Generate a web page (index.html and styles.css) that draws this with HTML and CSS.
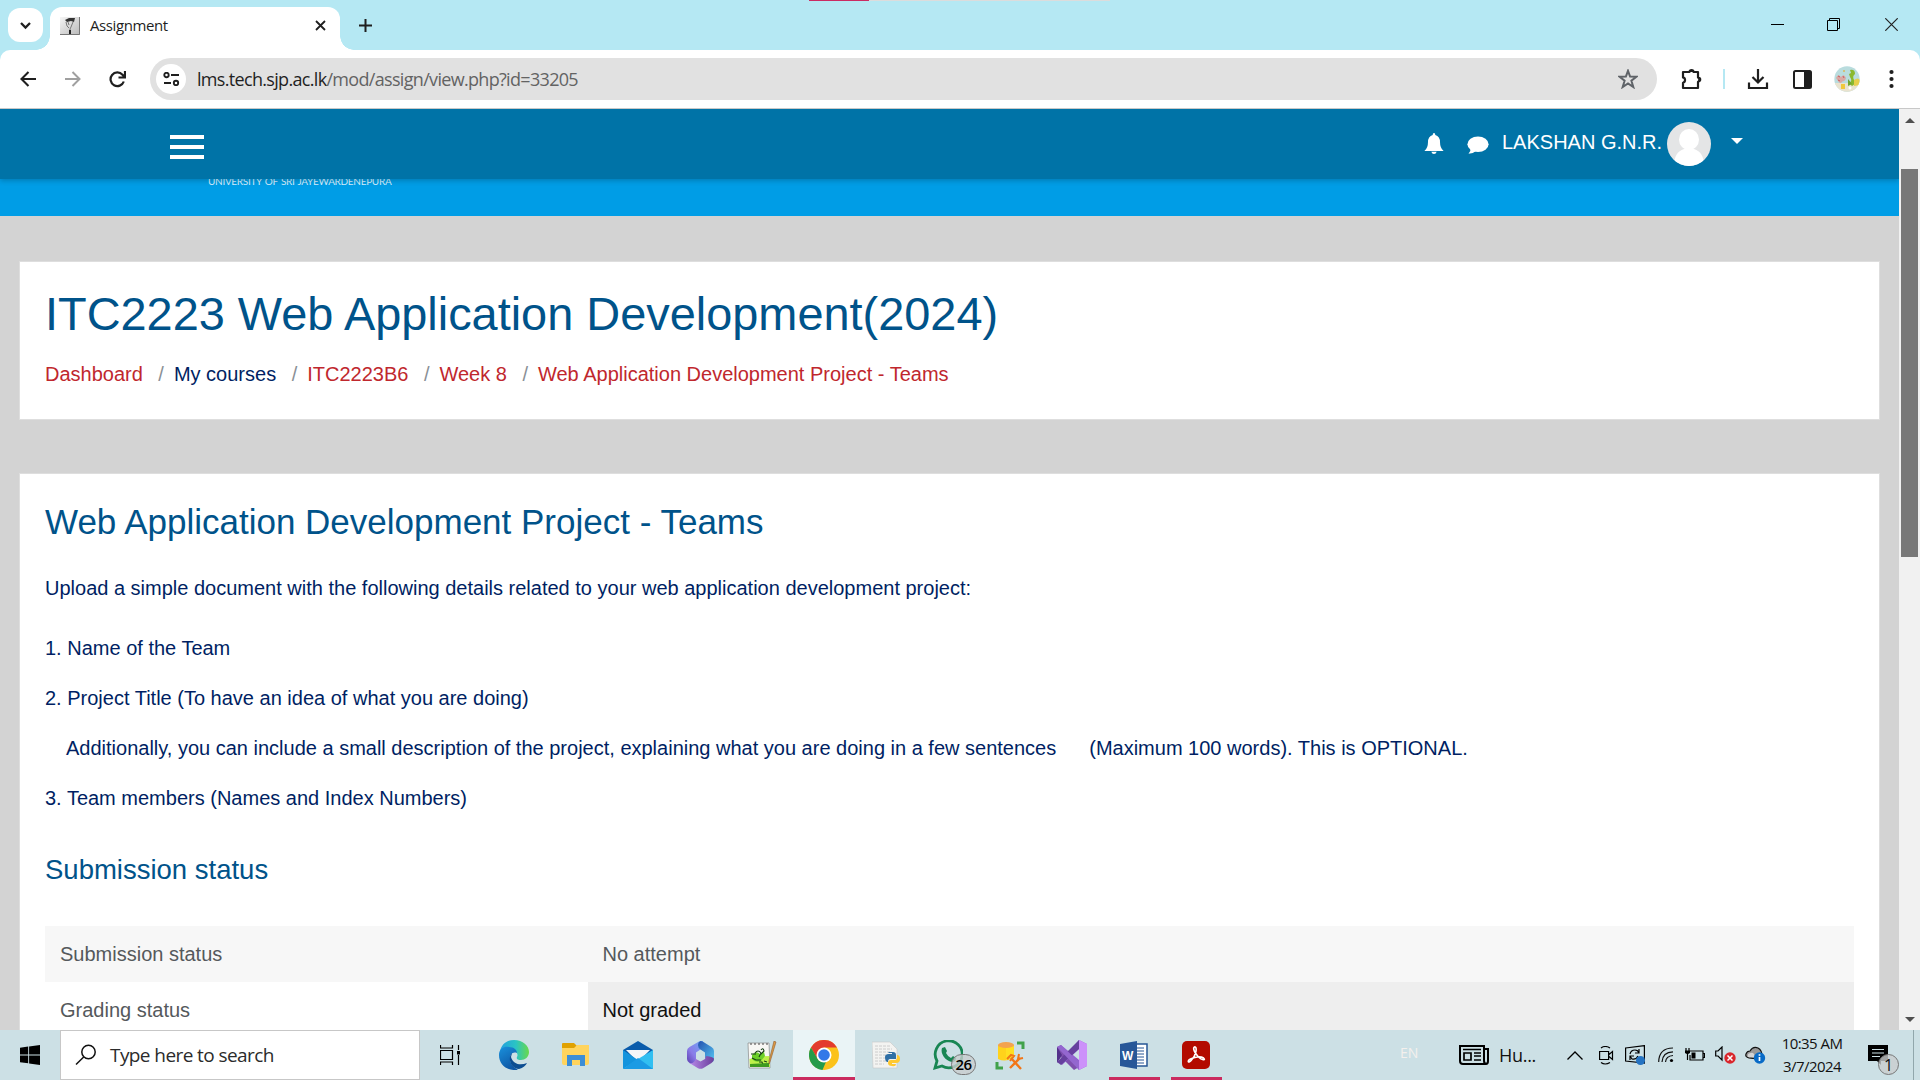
FILE: index.html
```
<!DOCTYPE html>
<html lang="en">
<head>
<meta charset="utf-8">
<title>Assignment</title>
<link rel="stylesheet" href="styles.css">
</head>
<body>
<div class="screen">
  <div class="peek"></div>
  <header class="tabstrip">
    <div class="tab-search"><svg width="13" height="9" viewBox="0 0 13 9"><path d="M2 2l4.5 4.5L11 2" fill="none" stroke="#1f1f1f" stroke-width="2.3"/></svg></div>
    <div class="tab">
      <svg class="favicon" width="20" height="18" viewBox="0 0 20 18"><defs><linearGradient id="fav" x1="0" y1="0" x2="1" y2="1"><stop offset="0" stop-color="#f6f6f6"/><stop offset="1" stop-color="#b9b9b9"/></linearGradient></defs><path d="M0 0h20v18H0z" fill="url(#fav)"/><path d="M19.500 0v17.500H0" fill="none" stroke="#777"/><path d="M5 3l4-2h6l-1 4-3-1-4 1z" fill="#333"/><path d="M6 5l1 4 2 2M13 5l-2 5-1 2v4M8 5l1 3" fill="none" stroke="#777" stroke-width="1"/><path d="M9 13h2v4H9z" fill="#222"/></svg>
      <span class="tab-title">Assignment</span>
      <svg class="tab-close" width="11" height="11" viewBox="0 0 11 11"><path d="M1 1l9 9M10 1l-9 9" stroke="#1f1f1f" stroke-width="1.800"/></svg>
    </div>
    <svg class="new-tab" width="13" height="13" viewBox="0 0 13 13"><path d="M6.500 0v13M0 6.500h13" stroke="#1f1f1f" stroke-width="2"/></svg>
    <div class="window-buttons">
      <svg width="13" height="13" viewBox="0 0 13 13"><path d="M0 6.500h13" stroke="#000"/></svg>
      <svg width="13" height="13" viewBox="0 0 13 13"><path d="M.5 2.500h10v10H.5zM2.500 2.500v-2h10v10h-2" fill="none" stroke="#000"/></svg>
      <svg width="13" height="13" viewBox="0 0 13 13"><path d="M.3.3l12.400 12.400M12.700.3L.3 12.700" stroke="#222" stroke-width="1.200"/></svg>
    </div>
  </header>

  <div class="toolbar">
    <svg class="back" width="16" height="16" viewBox="0 0 16 16"><path d="M8.500 1L1.500 8l7 7M1.500 8H16" fill="none" stroke="#1f1f1f" stroke-width="2.100"/></svg>
    <svg class="fwd" width="16" height="16" viewBox="0 0 16 16"><path d="M7.500 1l7 7-7 7M14.500 8H0" fill="none" stroke="#a0a0a0" stroke-width="2"/></svg>
    <svg class="reload" width="17" height="17" viewBox="0 0 17 17"><path d="M14.800 10.500A6.800 6.800 0 1 1 13.500 3.800L15.500 6M16 0v6.500H9.500" fill="none" stroke="#1f1f1f" stroke-width="2.200"/></svg>
    <div class="omnibox">
      <span class="site-info"><svg width="17" height="14" viewBox="0 0 17 14"><path d="M8 3h8M1 11h7" stroke="#1f1f1f" stroke-width="2"/><circle cx="3.500" cy="3" r="2.200" fill="none" stroke="#1f1f1f" stroke-width="1.900"/><circle cx="13" cy="11" r="2.200" fill="none" stroke="#1f1f1f" stroke-width="1.900"/></svg></span>
      <span class="url">lms.tech.sjp.ac.lk<span class="url-path">/mod/assign/view.php?id=33205</span></span>
      <svg class="star" width="20" height="20" viewBox="0 0 20 20"><path d="M10 1.800l2.100 5.800 6.300.2-5 3.900 1.900 6.300-5.300-3.600L4.700 18l1.900-6.300-5-3.900 6.300-.2z" fill="none" stroke="#5f6368" stroke-width="2"/></svg>
    </div>
    <div class="tools">
      <svg width="22" height="22" viewBox="0 0 22 22"><path d="M2 4h6.500a2 2 0 0 1 4 0H17v5.500a2.200 2.200 0 0 1 0 4.200V20H2v-5.200a2.800 2.800 0 0 0 0-5.400z" fill="none" stroke="#1f1f1f" stroke-width="2.200" stroke-linejoin="round"/><path d="M8 4a2.600 2.600 0 0 1 5 0zM17.500 8.700a2.800 2.800 0 0 1 0 5.600z" fill="#1f1f1f"/></svg>
      <i class="divider"></i>
      <svg width="22" height="22" viewBox="0 0 22 22"><path d="M11 1v13M5.500 9l5.500 5.500L16.500 9M2 14.500V20h18v-5.500" fill="none" stroke="#1f1f1f" stroke-width="2.200"/></svg>
      <svg width="19" height="19" viewBox="0 0 19 19"><rect x="1" y="1" width="17" height="17" rx="1.500" fill="#fff" stroke="#1f1f1f" stroke-width="2"/><path d="M11 1h7v17h-7z" fill="#1f1f1f"/></svg>
      <svg width="26" height="26" viewBox="0 0 26 26"><defs><clipPath id="pc"><circle cx="13" cy="13" r="12.700"/></clipPath></defs><g clip-path="url(#pc)"><path d="M0 0h26v26H0z" fill="#b9dcde"/><path d="M0 17h26v9H0z" fill="#e9e3cf"/><path d="M2 12q2-5 5-1 3-4 5 1-1 4-3 3-3 4-5 0z" fill="#d9a9a5"/><path d="M4 10l2 1M9 10l1 2M4 14l2 1" stroke="#c75f61"/><path d="M16 4q5-1 5 4-3 2-1 6 2 4-2 6l-3-3q4-2 1-6l-1-3 2-1z" fill="#8ab92e"/><path d="M14 13l4 5-4 2z" fill="#6fa634"/><path d="M20 14q4-3 6 0v5l-6 1z" fill="#e8cf4b"/><path d="M7 18h4v5H7z" fill="#efc83d"/><circle cx="10" cy="5" r="1" fill="#d9b95a"/><circle cx="16" cy="22" r="1.500" fill="#fff"/></g></svg>
      <svg width="5" height="20" viewBox="0 0 5 20"><g fill="#1f1f1f"><circle cx="2.500" cy="3" r="2.100"/><circle cx="2.500" cy="10" r="2.100"/><circle cx="2.500" cy="17" r="2.100"/></g></svg>
    </div>
  </div>

  <div class="viewport">
    <main class="page">
      <nav class="topnav">
        <div class="burger"><i></i><i></i><i></i></div>
        <div class="user">
          <svg class="bell" width="20" height="22" viewBox="0 0 20 22"><path d="M10 0q1.300 0 1.300 2Q16 3.500 16 9q0 6 3.600 9H.4Q4 15 4 9q0-5.500 4.700-7 0-2 1.300-2zM7.300 18.800h5.400Q12 21 10 21t-2.700-2.200z" fill="#fff"/></svg>
          <svg class="comment" width="22" height="19" viewBox="0 0 22 19"><ellipse cx="11" cy="8.300" rx="10.600" ry="7.800" fill="#fff"/><path d="M3.500 12q.5 3.500-2 5.800 4.500 0 7.500-2.800z" fill="#fff"/></svg>
          <span class="user-name">LAKSHAN G.N.R.</span>
          <svg class="avatar" width="44" height="44" viewBox="0 0 44 44"><defs><clipPath id="av"><circle cx="22" cy="22" r="22"/></clipPath></defs><g clip-path="url(#av)"><path d="M0 0h44v44H0z" fill="#e4e5e6"/><ellipse cx="22" cy="17.500" rx="10" ry="10.500" fill="#fff"/><path d="M7 44q0-14 10-17h10q10 3 10 17z" fill="#fff"/></g></svg>
          <svg class="caret" width="12" height="6" viewBox="0 0 12 6"><path d="M0 0h12L6 6z" fill="#fff"/></svg>
        </div>
      </nav>
      <div class="banner"><span>UNIVERSITY OF SRI JAYEWARDENEPURA</span></div>

      <section class="card course">
        <h1>ITC2223 Web Application Development(2024)</h1>
        <ol class="crumbs"><li>Dashboard</li><li class="plain">My courses</li><li>ITC2223B6</li><li>Week 8</li><li>Web Application Development Project - Teams</li></ol>
      </section>

      <section class="card content">
        <h2>Web Application Development Project - Teams</h2>
        <p class="lead">Upload a simple document with the following details related to your web application development project:</p>
        <p>1. Name of the Team</p>
        <p>2. Project Title (To have an idea of what you are doing)</p>
        <p class="indent"><span>Additionally, you can include a small description of the project, explaining what you are doing in a few sentences</span><span>(Maximum 100 words). This is OPTIONAL.</span></p>
        <p>3. Team members (Names and Index Numbers)</p>
        <h3>Submission status</h3>
        <div class="status">
          <div class="row shaded"><span>Submission status</span><span>No attempt</span></div>
          <div class="row"><span>Grading status</span><span class="graded">Not graded</span></div>
        </div>
      </section>
    </main>
    <aside class="scrollbar">
      <svg width="10" height="5" viewBox="0 0 10 5"><path d="M0 5h10L5 0z" fill="#505050"/></svg>
      <div class="thumb"></div>
      <svg class="down" width="10" height="5" viewBox="0 0 10 5"><path d="M0 0h10L5 5z" fill="#505050"/></svg>
    </aside>
  </div>

  <footer class="taskbar">
    <div class="start"><svg width="20" height="20" viewBox="0 0 20 20"><path d="M0 2.800L8.200 1.600v7.900H0zM9.100 1.500L20 0v9.500H9.100zM0 10.400h8.200v7.900L0 17.200zM9.100 10.400H20V20L9.100 18.400z"/></svg></div>
    <div class="search"><svg width="22" height="22" viewBox="0 0 22 22"><circle cx="13.500" cy="8" r="6.700" fill="none" stroke="#111" stroke-width="1.500"/><path d="M8.700 13L1 20.500" stroke="#111" stroke-width="1.500"/></svg><span>Type here to search</span></div>
    <div class="view"><svg width="20" height="20" viewBox="0 0 20 20"><path d="M.5 0v3h12V0M.5 20v-3h12v3M.5 5.500h12v9H.5zM18.500 0v5M18.500 10v10" fill="none" stroke="#000" stroke-width="1.200"/><path d="M17 6h3v3.500h-3z"/></svg></div>
    <div class="apps">
      <div class="app"><svg width="30" height="30" viewBox="0 0 30 30"><defs><linearGradient id="e1"><stop offset="0" stop-color="#249fdf"/><stop offset=".55" stop-color="#2ac4c4"/><stop offset="1" stop-color="#6ad94a"/></linearGradient><linearGradient id="e2" x1="0" y1="0" x2=".5" y2="1"><stop offset="0" stop-color="#1a91dc"/><stop offset="1" stop-color="#0e57a5"/></linearGradient></defs><path d="M1 12C2 4 8 0 15 0c9 0 15 6 15 12 0 5-4 8-8 8-3 0-5-1-4-3 2-4-2-7-7-7-4 0-8 1-10 2z" fill="url(#e1)"/><path d="M0 15c0-7 6-9 10-8 5 0 8 3 8 6-7-3-10 8-3 14l4 3C8 31 0 25 0 15z" fill="url(#e2)"/><path d="M13 13c-5 5-1 16 7 16 4-1 7-4 8-6-7 3-14 1-16-6z" fill="#0c4d91"/></svg></div>
      <div class="app"><svg width="28" height="24" viewBox="0 0 28 24"><path d="M0 1q0-1 1-1h11l3 3v6H0z" fill="#e0a100"/><path d="M0 5h12l3-3h12v18q0 2-2 2H2q-2 0-2-2z" fill="#ffd45d"/><path d="M5 12h18v11h-5v-6h-8v6H5z" fill="#3c8ed6"/></svg></div>
      <div class="app"><svg width="30" height="28" viewBox="0 0 30 28"><path d="M0 9L15 0l15 9v10H0z" fill="#0a5cab"/><path d="M3 9h24L15 21z" fill="#f4f6f8"/><path d="M0 9l15 10L0 28z" fill="#1494dd"/><path d="M30 9v19H0l15-10z" fill="#31bff1"/><path d="M0 28h30L15 17z" fill="#1b9be4"/></svg></div>
      <div class="app"><svg width="27" height="28" viewBox="0 0 27 28"><defs><linearGradient id="m1" x1="1" y1="0" x2="0" y2="1"><stop offset="0" stop-color="#6fa8f5"/><stop offset=".6" stop-color="#8a7be8"/><stop offset="1" stop-color="#5a3cae"/></linearGradient><linearGradient id="m2" x1="0" y1="0" x2="1" y2="1"><stop offset="0" stop-color="#2450ae"/><stop offset="1" stop-color="#56c8f4"/></linearGradient><linearGradient id="m3"><stop offset="0" stop-color="#b88aea"/><stop offset="1" stop-color="#6a3f9b"/></linearGradient></defs><path d="M12 .5L2.500 6Q0 7.500 0 10v8q0 2.500 2.500 4l2 1Q9 23 9 18v-6.500l4.500-3L16 5V0q-2-.6-4 .5z" fill="url(#m1)"/><path d="M13.500 0q1.200 0 2.500.7L24.500 6Q27 7.500 27 10v8q0 2-1.500 3.300L18 17v-5.500l-4.500-3Q11 7 11 4q0-3 2.500-4z" fill="url(#m2)"/><path d="M2 21.700q4.500 1.800 7-3.700l4.500 2.500L18 18l1-3q8 1 8 3 0 2.500-2.500 4L16 27.200q-2.500 1.300-5 0z" fill="url(#m3)"/></svg></div>
      <div class="app"><svg width="30" height="28" viewBox="0 0 30 28"><path d="M1 2h21l1 25H2z" fill="#f7f7f4" stroke="#888" stroke-width=".7"/><path d="M3 3h2M7 3h2M11 3h2M15 3h2M19 3h2" stroke="#444"/><path d="M2.500 18q8-3 20-3l.5 11H3z" fill="#bdf04a"/><path d="M5 14q4-5 8-1l4-2 1 4-4 5q-6 2-9-2z" fill="#6ccf2a"/><path d="M4 13h5M5 17l4 2h5M8 12q3-4 6 0l-2 4M14 9q2-3 3 1l-3 3M12 21h3l1 3M17 20l3 1" fill="none" stroke="#153e15" stroke-width="1.100"/><path d="M3 23l19-1v4H3z" fill="#3e9a20"/><path d="M27 0l2 1-6 20-1 2v-3z" fill="#df9a43" stroke="#8b5d31" stroke-width=".6"/></svg></div>
      <div class="app active"><svg width="30" height="30" viewBox="0 0 30 30"><circle cx="15" cy="15" r="15" fill="#fbc21b"/><path d="M2 7.500A15 15 0 0 1 28 7.500H15L8.500 19z" fill="#e33b2e"/><path d="M2 7.500l6.500 11.300q2.500 4 8.500 3L13.500 30A15 15 0 0 1 2 7.500z" fill="#259b4a"/><circle cx="15" cy="15" r="7.500" fill="#fff"/><circle cx="15" cy="15" r="5.800" fill="#3379e8"/></svg></div>
      <div class="app"><svg width="28" height="28" viewBox="0 0 28 28"><path d="M0 1h18l7 7v19H1z" fill="#f3f3f1" stroke="#c6c6c6" stroke-width=".6"/><path d="M3 5h15M3 8h17M3 11h15M3 14h14M3 17h11M3 20h12M3 23h9" stroke="#ccc" stroke-width="1" stroke-dasharray="3 1"/><path d="M17 11h4q3 0 3 3v4h-6q-2 0-2 3h-1q-2-1-2-5 0-3 4-3h3v-1h-4z" fill="#2f6fa5"/><path d="M25 14q3 0 3 4 0 4-4 4h-4v1h4q0 3-4 2-4 0-4-3 0-3 3-3h4q2 0 2-3z" fill="#ffc931"/></svg></div>
      <div class="app"><svg width="30" height="30" viewBox="0 0 30 30"><path d="M2 28l2-7A13.500 13.500 0 1 1 9 26z" fill="none" stroke="#188653" stroke-width="2.800"/><path d="M9 8l3-1 2 4-1 2q2 4 5 5l2-2 3 2q0 4-4 4C12 21 7 13 9 8z" fill="#188653"/></svg><span class="badge unread">26</span></div>
      <div class="app"><svg width="30" height="29" viewBox="0 0 30 29"><path d="M3 4h16v12q-8 6-16 2z" fill="#ffd21b"/><path d="M11 5h8v11l-8 3z" fill="#ffdf20"/><ellipse cx="11" cy="4" rx="8" ry="3" fill="#f3a34f"/><path d="M22 2h6v6M2 21v6h6" fill="none" stroke="#41a24a" stroke-width="3"/><path d="M16 17l10 11M25 17L15 27" stroke="#f27617" stroke-width="2.400"/><path d="M12 18l4-4 3 1-4 5M24 13l-1 5 5-1" fill="none" stroke="#f27617" stroke-width="2"/></svg></div>
      <div class="app"><svg width="30" height="30" viewBox="0 0 30 30"><path d="M0 7l4-2 18 22-5 3L4 17l-4 5z" fill="#7f50ae"/><path d="M0 7l5 8-5 8z" fill="#53318b"/><path d="M4 24L22 0l8 4v22l-8 4L4 5l18 15V9L5 25z" fill="#9360d0"/><path d="M22 0l8 4v22l-8 4z" fill="#cc91fa"/><path d="M0 22l4 3L22 9V0z" fill="#66409e"/><path d="M4 5l18 17v8L0 7z" fill="#9467cf"/></svg></div>
      <div class="app open"><svg width="28" height="28" viewBox="0 0 28 28"><path d="M15 3h12v22H15z" fill="#fff" stroke="#275795" stroke-width="1.500"/><path d="M17 7h7M17 10h7M17 13h7M17 16h7M17 19h7M17 22h7" stroke="#275795" stroke-width="1.200"/><path d="M0 3l17-3v28L0 25z" fill="#275798"/><text x="2" y="19" class="word-letter">W</text></svg></div>
      <div class="app open"><svg width="28" height="28" viewBox="0 0 28 28"><rect width="28" height="28" rx="5" fill="#b30b00"/><path d="M12.500 6c3-1 2 8-3 13-3 4-5 1-1-1 4-2 10-3 13-1 3 3-2 2-5-1-4-4-6-9-4-10z" fill="none" stroke="#fff" stroke-width="1.600"/></svg></div>
    </div>
    <div class="lang">EN</div>
    <div class="news"><svg width="30" height="20" viewBox="0 0 30 20"><path d="M1 1h24v15q0 3 3 3H4q-3 0-3-3zM25 4h4v12q0 3-2 3" fill="none" stroke="#000" stroke-width="2"/><path d="M5 8h7v7H5zM4 4.500h18M15 8h7M15 11h7M15 15h7" fill="none" stroke="#000" stroke-width="1.700"/></svg><span>Hu...</span></div>
    <div class="tray">
      <svg width="16" height="9" viewBox="0 0 16 9"><path d="M.5 8.500L8 1l7.500 7.500" fill="none" stroke="#000" stroke-width="1.300"/></svg>
      <svg width="15" height="19" viewBox="0 0 15 19"><path d="M.6 5.500h9v8h-9zM10 8.500l3.500-3v8l-3.500-3M2 2q4-3 9 0M2 16.500q4 3 9 0" fill="none" stroke="#000" stroke-width="1.200"/></svg>
      <svg width="20" height="20" viewBox="0 0 20 20"><path d="M.6 3L19.400.6V18L.6 16z" fill="none" stroke="#000" stroke-width="1.200"/><path d="M5 9q1-4 5-4 3 0 4 3M14 4v4h-4M13 11q-2 4-6 3l-2-3M5 15v-4h4" fill="none" stroke="#000" stroke-width="1.200"/><circle cx="15.500" cy="15.500" r="4.500" fill="#2573c2"/></svg>
      <svg width="16" height="16" viewBox="0 0 16 16"><path d="M.7 15Q1 1 15 1M4 15Q4.500 5 15 4.800M7.500 15Q8 9 15 8.500" fill="none" stroke="#111" stroke-width="1.200"/><circle cx="13.500" cy="13.500" r="1.600"/></svg>
      <svg width="20" height="14" viewBox="0 0 20 14"><path d="M5 3h13v9H5V7M18 5.500h1.500v4H18M2.500 5v7M1 0v3M4 0v3" fill="none" stroke="#000" stroke-width="1.200"/><path d="M0 2.500h5V5q-2.500 2-5 0zM6.500 4.500h4v6h-4z"/></svg>
      <svg width="21" height="18" viewBox="0 0 21 18"><path d="M.7 5H3l4-4v13l-4-4H.7z" fill="none" stroke="#000" stroke-width="1.200"/><circle cx="15" cy="12" r="5.700" fill="#d9262c"/><path d="M12.500 9.500l5 5M17.500 9.500l-5 5" stroke="#fff" stroke-width="1.500"/></svg>
      <svg width="21" height="18" viewBox="0 0 21 18"><path d="M4 12q-4-1-3-4 1-3 4-3 3-5 8-3 4 2 4 8l-5 3z" fill="#999" stroke="#111" stroke-width="1.200"/><path d="M3 11q-1-4 3-4 3-1 4 4" fill="#d4d4d4"/><circle cx="14.500" cy="12" r="5.700" fill="#086bc7"/><path d="M14.500 11v4M14.500 8.300v1.500" stroke="#fff" stroke-width="1.700"/></svg>
    </div>
    <div class="clock"><span>10:35 AM</span><span>3/7/2024</span></div>
    <div class="notify"><svg width="20" height="20" viewBox="0 0 20 20"><path d="M0 0h20v16h-7v4l-4-4H0z"/><path d="M4 4.500h12M4 8h12M4 11.500h8" stroke="#cce0e5" stroke-width="1.200"/></svg><span class="badge">1</span></div>
  </footer>
</div>
</body>
</html>
```
FILE: styles.css
```
* { box-sizing: border-box; }
body { margin: 0; font-family: "Liberation Sans", Arial, sans-serif; }
svg { display: block; flex: none; }
h1, h2, h3, p, ol { margin: 0; padding: 0; font-weight: 400; }

.screen { width: 1920px; height: 1080px; overflow: hidden; display: flex; flex-direction: column; position: relative; background: #b5e8f3; }
.peek { position: absolute; top: 0; left: 809px; width: 301px; height: 1px; background: linear-gradient(90deg, #cb2b62 60px, #dcdcdc 60px); }

/* Browser chrome */
.tabstrip { height: 50px; flex: none; display: flex; align-items: flex-start; padding-left: 8px; }
.tab-search { width: 35px; height: 34px; margin-top: 8px; border-radius: 12px; background: #fff; display: flex; align-items: center; justify-content: center; }
.tab { position: relative; width: 290px; height: 43px; margin: 7px 0 0 7px; padding: 0 14px 0 10px; border-radius: 12px 12px 0 0; background: #fff; display: flex; align-items: center; }
.tab::before, .tab::after { content: ""; position: absolute; bottom: 0; width: 14px; height: 14px; }
.tab::before { left: -14px; background: radial-gradient(circle at 0 0, transparent 13.5px, #fff 14px); }
.tab::after { right: -14px; background: radial-gradient(circle at 100% 0, transparent 13.5px, #fff 14px); }
.favicon { margin-bottom: 5px; }
.tab-title { margin: 0 auto 7px 10px; font: 15px/20px "Open Sans", "Noto Sans", sans-serif; letter-spacing: -.4px; color: #1f1f1f; }
.tab-close { margin-bottom: 7px; }
.new-tab { margin: 19px 0 0 19px; }
.window-buttons { margin: 18px 22px 0 auto; display: grid; grid-template-columns: 56px 58px 13px; }

.toolbar { height: 59px; flex: none; display: flex; align-items: center; padding: 0 26px 0 20px; background: #fff; border-bottom: 1px solid #c8c8c8; border-radius: 10px 10px 0 0; }
.fwd { margin-left: 29px; }
.reload { margin-left: 28px; }
.omnibox { width: 1507px; height: 42px; margin-left: 24px; padding: 0 19px 0 6px; display: flex; align-items: center; border-radius: 21px; background: #e1e1e1; }
.site-info { width: 30px; height: 30px; border-radius: 50%; background: #fff; display: flex; align-items: center; justify-content: center; }
.url { margin: 0 auto 1px 11px; font: 18px/26px "Open Sans", "Noto Sans", sans-serif; letter-spacing: -.68px; color: #1f1f1f; white-space: nowrap; }
.url-path { color: #636363; }
.tools { margin-left: 24px; display: grid; grid-template-columns: 42px 24px 46px 41px 55px 5px; align-items: center; }
.divider { width: 2px; height: 20px; background: #b5e8f3; }

/* Page */
.viewport { height: 921px; flex: none; display: flex; }
.page { width: 1899px; overflow: hidden; background: #d3d3d3; }
.topnav { position: relative; z-index: 1; height: 70px; padding: 0 156px 0 170px; display: flex; align-items: flex-start; justify-content: space-between; background: #0073a7; box-shadow: 0 2px 5px rgba(0, 0, 0, .2); }
.burger { padding-top: 26px; display: grid; gap: 6px; }
.burger i { width: 34px; height: 4px; background: #fff; }
.user { display: flex; padding-top: 13px; color: #fff; }
.bell { margin-top: 11px; }
.comment { margin: 14px 0 0 23px; }
.user-name { width: 159px; margin: 8px 6px 0 13px; font-size: 20px; line-height: 24px; white-space: nowrap; }
.caret { margin: 16px 0 0 20px; }
.banner { height: 37px; padding-left: 208px; background: #009de6; }
.banner span { display: block; position: relative; top: -4px; font: 10px/12px Lato, sans-serif; letter-spacing: -.3px; word-spacing: 1px; color: #d5efff; white-space: nowrap; }

.card { width: 1861px; margin-left: 19px; border: 1px solid #dedede; padding: 0 25px; background: #fff; }
.course { height: 159px; margin-top: 45px; }
h1 { padding-top: 25px; font-size: 46.900px; line-height: 54px; color: #00538a; white-space: nowrap; }
.crumbs { display: flex; list-style: none; margin-top: 21px; font-size: 20px; line-height: 24px; color: #c0272d; white-space: nowrap; }
.crumbs li + li::before { content: "/"; margin: 0 10px 0 15.500px; color: #8a9096; }
.crumbs .plain { color: #001f63; }
.content { height: 600px; margin-top: 53px; }
h2 { padding-top: 28px; font-size: 35px; line-height: 40px; color: #00538a; white-space: nowrap; }
.content p { height: 50px; font-size: 20px; line-height: 24px; color: #001f63; white-space: nowrap; }
.content .lead { height: 60px; margin-top: 34px; }
.indent { display: flex; gap: 33px; padding-left: 21px; }
h3 { margin-top: 18px; font-size: 27.500px; line-height: 32px; color: #00538a; }
.status { margin-top: 40px; }
.row { display: grid; grid-template-columns: 543px 1266px; width: 1809px; height: 56px; font-size: 20px; line-height: 56px; color: #55595c; }
.row span { padding-left: 15px; }
.row span + span { padding-left: 14.500px; }
.shaded { background: #f7f7f7; }
.graded { background: #eee; color: #111; }

.scrollbar { width: 21px; background: #f1f1f1; display: flex; flex-direction: column; align-items: center; padding: 9px 0 8px; }
.thumb { width: 17px; height: 388px; margin-top: 46px; background: #787878; }
.down { margin-top: auto; }

/* Taskbar */
.taskbar { height: 50px; flex: none; display: flex; background: #cce0e5; font-family: "Open Sans", "Noto Sans", sans-serif; color: #111; }
.start { width: 60px; display: flex; align-items: center; justify-content: center; }
.search { width: 360px; border: 1px solid #c7c7c7; background: #fff; display: flex; align-items: center; padding-left: 14px; gap: 13px; font-size: 19px; letter-spacing: -.58px; color: #2b2b2b; white-space: nowrap; }
.view { width: 63px; display: flex; align-items: center; padding-left: 20px; }
.apps { display: flex; }
.app { position: relative; width: 62px; display: flex; align-items: center; justify-content: center; }
.active { background: #eaf4f6; box-shadow: inset 0 -3px #cb2b5f; }
.open::after { content: ""; position: absolute; left: 6px; right: 5px; bottom: 0; height: 3px; background: #cb2b5f; }
.word-letter { font: bold 12px "Liberation Sans", sans-serif; fill: #fff; }
.badge { position: absolute; display: flex; align-items: center; justify-content: center; width: 21px; height: 21px; border: 1px solid #777; border-radius: 50%; background: #c9cdcecc; font-size: 16px; line-height: 1; }
.unread { left: 34px; top: 24px; width: 25px; border-radius: 11px; font-size: 15px; font-weight: 600; letter-spacing: -.5px; color: #000; }
.lang { width: 59px; margin-left: 173px; font-size: 14px; line-height: 46px; color: #f4f0ed; }
.news { width: 108px; display: flex; align-items: center; gap: 10px; font-size: 18px; letter-spacing: -.3px; }
.tray { display: grid; grid-template-columns: 32px 26px 33px 27px 30px 30px 37px; align-items: center; }
.clock { width: 60px; display: flex; flex-direction: column; align-items: center; padding-top: 2px; font-size: 15px; line-height: 23px; letter-spacing: -.55px; white-space: nowrap; }
.notify { position: relative; width: 46px; margin-left: 26px; padding-top: 15px; border-right: 1px solid #91a7ac; }
.notify .badge { left: 10px; top: 24px; }
```
